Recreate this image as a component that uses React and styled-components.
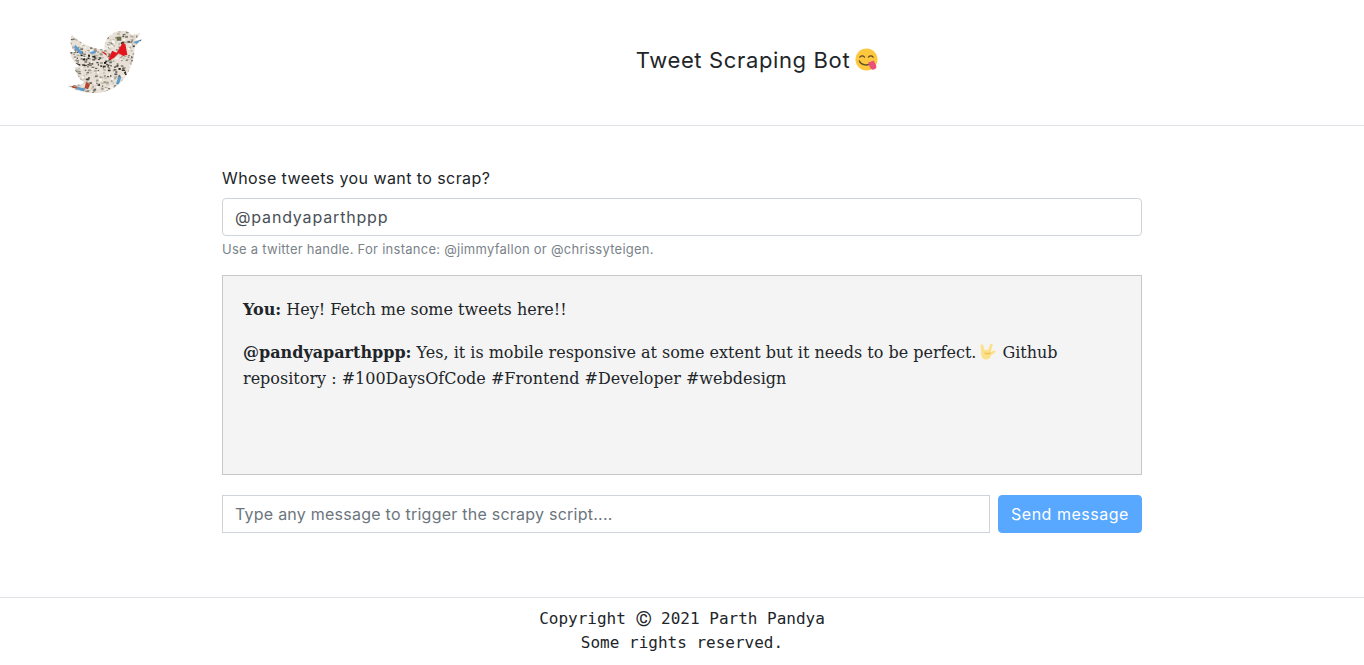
import React from "react";
import styled, { createGlobalStyle } from "styled-components";

const Global = createGlobalStyle`
  html, body { margin: 0; padding: 0; background: #fff; }
  * { box-sizing: border-box; }
  body { font-family: "Inter", "Noto Sans", sans-serif; color: #212529; }
`;

const Header = styled.header`
  height: 126px;
  border-bottom: 1px solid #dee2e6;
  display: flex;
  align-items: center;
`;
const LogoCell = styled.div`
  flex: none;
  width: 150px;
  padding-left: 50px;
  display: flex;
  align-self: flex-start;
  padding-top: 20px;
  svg { flex: none; }
`;
const Title = styled.h1`
  flex: 1;
  margin: 0;
  padding-bottom: 6px;
  display: flex;
  justify-content: center;
  align-items: center;
  gap: 5px;
  font-size: 22px;
  font-weight: 400;
  line-height: 30px;
  letter-spacing: 0.64px;
  color: #212529;
`;
const Main = styled.main`
  width: 920px;
  margin: 0 auto;
  padding-top: 40px;
  height: 471px;
`;
const Label = styled.label`
  display: block;
  font-size: 16px;
  line-height: 24px;
  letter-spacing: 0.42px;
  margin-bottom: 8px;
  color: #212529;
`;
const Field = styled.input`
  flex: ${p => (p.$grow ? 1 : "none")};
  width: ${p => (p.$grow ? "auto" : "100%")};
  min-width: 0;
  height: 38px;
  padding: 6px 12px;
  border: 1px solid #ced4da;
  border-radius: ${p => (p.$square ? "0" : "4px")};
  font: 400 16px/24px "Inter", sans-serif;
  letter-spacing: ${p => (p.$square ? "0.24px" : "0.83px")};
  color: #495057;
  background: #fff;
  outline: none;
  display: block;
  &::placeholder { color: #6c757d; opacity: 1; }
`;
const Help = styled.small`
  display: block;
  margin-top: 3px;
  font-size: 13px;
  line-height: 20px;
  letter-spacing: 0.26px;
  color: #7b838a;
`;
const ChatBox = styled.div`
  height: 200px;
  margin-top: 16px;
  padding: 21px 20px 20px;
  background: #f4f4f4;
  border: 1px solid #c8c8c8;
  font-family: "DejaVu Serif", serif;
  font-size: 16px;
  line-height: 26px;
  color: #212529;
`;
const Msg = styled.p`
  margin: 0 0 17px;
  strong { font-weight: 700; }
`;
const SendRow = styled.form`
  display: flex;
  gap: 8px;
  margin-top: 20px;
`;
const SendButton = styled.button`
  width: 144px;
  height: 38px;
  border: 1px solid #58a8ff;
  border-radius: 4px;
  background: #58a8ff;
  color: #fff;
  font: 400 16px/24px "Inter", sans-serif;
  letter-spacing: 0.52px;
  padding: 0;
`;
const Footer = styled.footer`
  border-top: 1px solid #dee2e6;
  padding-top: 9px;
  text-align: center;
  font-family: "DejaVu Sans Mono", monospace;
  font-size: 16px;
  line-height: 24px;
  color: #212529;
  height: 68px;
`;
const Copy = styled.span`
  font-family: "Roboto", sans-serif;
  font-size: 21px;
  line-height: 20px;
  vertical-align: -2px;
  letter-spacing: -0.5px;
`;
const InlineEmoji = styled.svg`
  display: inline-block;
  vertical-align: -3px;
  margin: 0 5px 0 3px;
`;

function rng(seed) {
  let s = seed;
  return () => ((s = (s * 16807) % 2147483647) - 1) / 2147483646;
}
const BIRD =
  "M55 198 C72 196 92 196 106 186 C92 182 80 170 74 142 C80 142 85 141 88 137 C74 132 62 112 60 96 C66 98 72 98 78 96 C62 84 58 62 66 44 C84 66 122 86 164 90 C160 62 178 34 214 32 C230 32 240 38 246 46 C254 44 262 42 270 40 C266 48 260 56 254 62 C262 62 268 60 276 58 C270 66 262 74 254 80 C254 130 222 218 136 219 C104 219 76 212 55 198 Z";
const marks = (() => {
  const r = rng(4217);
  const out = [];
  const pal = ["#2a2a24", "#55534a", "#6f6a5e", "#8c8676", "#a39c8c", "#b7ae9e", "#c9c1b2", "#fff", "#fff", "#7d8a6c"];
  for (let i = 0; i < 720; i++) {
    const x = 50 + r() * 230;
    const y = 28 + r() * 195;
    const band = Math.abs(y - (118 + (x - 105) * 0.36)) < 22;
    out.push({
      x,
      y,
      w: 3 + r() * 6,
      h: 3 + r() * 3,
      c: band && r() < 0.6 ? "#16160f" : pal[Math.floor(r() * pal.length)],
      o: 0.5 + r() * 0.5,
    });
  }
  return out;
})();

const Bird = () => (
  <svg width="110" height="85" viewBox="0 0 330 255" aria-label="logo">
    <defs>
      <clipPath id="birdClip"><path d={BIRD} /></clipPath>
    </defs>
    <g clipPath="url(#birdClip)">
      <rect width="330" height="255" fill="#e8e0d6" />
      {marks.map((m, i) => (
        <rect key={i} x={m.x} y={m.y} width={m.w} height={m.h} fill={m.c} opacity={m.o} />
      ))}
      <path d="M156 94l12 6 8 18 10-26 14 6 18-30 8 4 6 32-12 4-14-8-14 14-12 6-8-12-12-8z" fill="#e2161c" />
      <path d="M76 74l22 24-6 6-20-22zM250 66l24-8-14 14zM206 168l8 4-8 22-8-2zM82 200l24 6-4 8-22-6zM120 96l16-4 2 8-16 2z" fill="#5b9ccf" />
      <path d="M200 50h14v12h-14z" fill="#6b6f4a" />
      <path d="M108 186l12 6-6 16-10-4zM60 198l22 2-4 6z" fill="#b8442e" />
    </g>
  </svg>
);

const FaceEmoji = () => (
  <svg width="23" height="23" viewBox="0 0 24 24">
    <circle cx="12" cy="12" r="11.5" fill="#fdc83f" />
    <path d="M5 9.5q2.5-2.6 5 0M14 9.5q2.5-2.6 5 0" fill="none" stroke="#5a4a2a" strokeWidth="1.4" strokeLinecap="round" />
    <path d="M4.5 13.5c2 4.5 9 6 14 1.5" fill="none" stroke="#5a4a2a" strokeWidth="1.4" strokeLinecap="round" />
    <path d="M13.5 15.5l6-2.5 2.6 5.2a3.4 3.4 0 0 1-6 3z" fill="#e8527a" />
  </svg>
);

const HandEmoji = () => (
  <InlineEmoji width="18" height="18" viewBox="0 0 18 18">
    <path
      d="M2.6 1.4c.8-.3 1.5.1 1.7.9l1.3 4.9c.9-.5 2.4-.6 3.6-.2l1.9-5.4c.3-.7.9-1 1.6-.8.7.2 1 .9.8 1.6l-1.8 6.7 2.9-1.4c.8-.4 1.5-.2 1.8.4.3.6.1 1.2-.5 1.6l-3.8 2.6c-.6 2.6-2.4 4.1-4.8 4.1-3 0-4.8-2-5-5L1.6 3c-.1-.7.3-1.4 1-1.6z"
      fill="#fde08a"
    />
    <path d="M6 10c1.6 1.2 3.6 1.2 5.2-.2" fill="none" stroke="#f0bf55" strokeWidth="1.2" strokeLinecap="round" />
  </InlineEmoji>
);

export default function App() {
  return (
    <>
      <Global />
      <Header>
        <LogoCell><Bird /></LogoCell>
        <Title>Tweet Scraping Bot <FaceEmoji /></Title>
      </Header>
      <Main>
        <Label htmlFor="handle">Whose tweets you want to scrap?</Label>
        <Field id="handle" defaultValue="@pandyaparthppp" />
        <Help>Use a twitter handle. For instance: @jimmyfallon or @chrissyteigen.</Help>
        <ChatBox>
          <Msg><strong>You:</strong> Hey! Fetch me some tweets here!!</Msg>
          <Msg>
            <strong>@pandyaparthppp:</strong> Yes, it is mobile responsive at some extent but it needs to be perfect.
            <HandEmoji />Github repository : #100DaysOfCode #Frontend #Developer #webdesign
          </Msg>
        </ChatBox>
        <SendRow onSubmit={e => e.preventDefault()}>
          <Field $grow $square placeholder="Type any message to trigger the scrapy script...." />
          <SendButton type="submit">Send message</SendButton>
        </SendRow>
      </Main>
      <Footer>
        Copyright <Copy>©</Copy> 2021 Parth Pandya<br />Some rights reserved.
      </Footer>
    </>
  );
}
